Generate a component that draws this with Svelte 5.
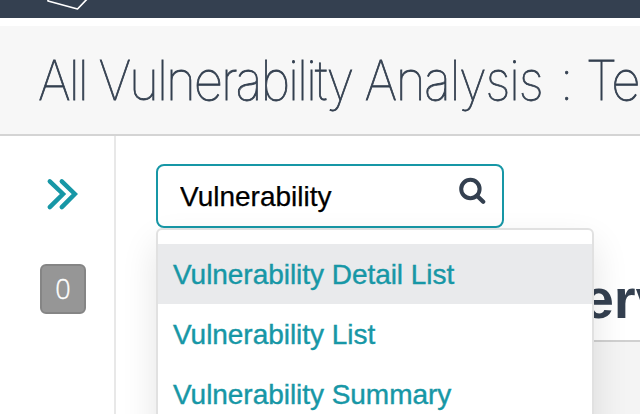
<script>
  let query = $state('Vulnerability');
  const results = [
    { name: 'Vulnerability Detail List', active: true },
    { name: 'Vulnerability List', active: false },
    { name: 'Vulnerability Summary', active: false }
  ];
</script>

<div class="page">
  <nav>
    <svg class="logo" width="60" height="18" viewBox="0 0 60 18" fill="none" stroke="#fff" stroke-width="1.7" stroke-linejoin="round">
      <path d="M8 -4V1L37.5 9L50 -4" />
    </svg>
  </nav>
  <header>
    <h1><span class="w1">All</span><span class="w2">Vulnerability</span><span class="w3">Analysis</span><span class="w4">:</span><span class="w5">Te</span></h1>
  </header>
  <div class="body">
    <aside>
      <svg class="expand" width="32" height="34" viewBox="0 0 32 34" fill="none" stroke="#1797a6" stroke-width="4.5" stroke-linecap="round" stroke-linejoin="miter">
        <path d="M3.8 4.3L17 17L3.8 30.2M15.8 4.3L28.8 17L15.8 30.2" />
      </svg>
      <div class="count">0</div>
    </aside>
    <main>
      <div class="search">
        <input bind:value={query} aria-label="Search" />
        <svg width="28" height="28" viewBox="0 0 28 28" fill="none" stroke="#344050">
          <circle cx="12.4" cy="12" r="9.2" stroke-width="4" />
          <path d="M19 18.8L25.2 24.8" stroke-width="4.2" stroke-linecap="round" />
        </svg>
        <ul>
          {#each results as r}
            <li class:active={r.active}><span>{r.name}</span></li>
          {/each}
        </ul>
      </div>
      <h2>Overview</h2>
      <section></section>
    </main>
  </div>
</div>

<style>
  :global(body) { margin: 0; overflow: hidden; }
  .page {
    width: 640px; height: 414px; overflow: hidden; background: #fff;
    display: flex; flex-direction: column;
    font-family: "Liberation Sans", Arial, sans-serif; color: #344050;
  }
  nav { height: 18px; flex: none; background: #344050; margin-bottom: 8px; }
  .logo { display: block; margin-left: 40px; }
  header {
    box-sizing: border-box; height: 110px; flex: none; background: #f7f7f7;
    border-bottom: 2px solid #d4d4d4; padding-left: 38px; overflow: hidden;
  }
  h1 {
    margin: 0; display: flex; white-space: nowrap;
    font: 100 55px/108px Inter, sans-serif; letter-spacing: -2.2px;
    transform: scaleX(0.93); transform-origin: 0 0;
    -webkit-text-stroke: 0.8px;
  }
  h1 span { flex: none; }
  .w1 { width: 65px; }
  .w2 { width: 286px; }
  .w3 { width: 210px; letter-spacing: -1.6px; }
  .w4 { width: 28px; }
  .body { display: flex; flex: 1; min-height: 0; }
  aside { width: 114px; flex: none; border-right: 2px solid #e8e8e8; }
  .expand { display: block; margin: 41px 0 0 46px; }
  .count {
    box-sizing: border-box; width: 46px; height: 50px; margin: 53px 0 0 40px;
    border: 2px solid #858585; border-radius: 6px; background: #969696;
    color: #fff; text-align: center; font: 300 27px/46px "Open Sans", sans-serif;
    -webkit-text-stroke: 0.4px;
  }
  main { flex: 1; min-width: 0; padding-top: 28px; }
  .search {
    position: relative; box-sizing: border-box; width: 348px; height: 64px;
    margin-left: 40px; border: 2px solid #1797a6; border-radius: 8px;
    display: flex; align-items: center;
  }
  input {
    border: 0; outline: 0; padding: 2px 0 0; margin: 0 0 0 22px; width: 278px; height: 56px;
    box-sizing: border-box;
    background: transparent; color: #000; font: 28px "Liberation Sans", sans-serif;
    -webkit-text-stroke: 0.25px;
  }
  .search svg { margin-bottom: 10px; }
  ul {
    position: absolute; z-index: 2; left: -2px; top: 62px; box-sizing: border-box;
    width: 438px; height: 220px; margin: 0; padding: 14px 0 0; list-style: none;
    background: #fff; border: 2px solid #e1e1e1; border-radius: 6px;
    box-shadow: 0 16px 36px rgba(0, 0, 0, 0.11);
  }
  li {
    height: 60px; box-sizing: border-box; padding: 1px 0 0 15px; color: #1797a6;
    font-size: 28px; line-height: 60px; letter-spacing: -0.04px;
    -webkit-text-stroke: 0.4px; white-space: nowrap;
  }
  .active { background: #e9eaec; }
  h2 {
    margin: 38px 0 0 60px; padding-left: 332px; height: 74px; white-space: nowrap;
    font-size: 56px; line-height: 66px; font-weight: 700; border-bottom: 2px solid #d0d0d0;
  }
  section { margin-left: 60px; height: 80px; background: #f4f4f4; }
</style>
